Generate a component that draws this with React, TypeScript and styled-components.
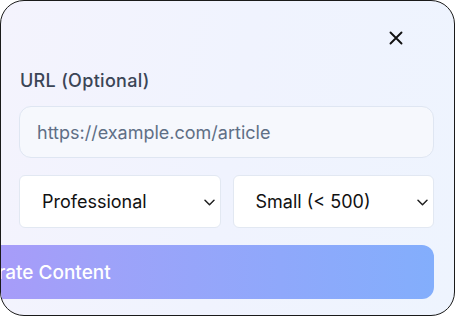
import React from "react";
import styled, { createGlobalStyle } from "styled-components";

const Global = createGlobalStyle`
  html, body { margin: 0; padding: 0; background: #ffffff; }
  * { box-sizing: border-box; }
`;

const Frame = styled.div`
  width: 455px;
  height: 316px;
  border: 1.5px solid #1a1a1a;
  border-radius: 24px;
  overflow: hidden;
  background: linear-gradient(100deg, #f4f3fd 0%, #f0f3fe 50%, #eef4fe 100%);
  font-family: Inter, "Noto Sans", sans-serif;
  display: flex;
  flex-direction: column;
  padding: 0 20px 0 18px;
`;

const Header = styled.div`
  height: 68px;
  display: flex;
  justify-content: flex-end;
  align-items: flex-start;
  padding-top: 29px;
  padding-right: 30px;
`;

const CloseButton = styled.button`
  width: 16px;
  height: 16px;
  padding: 0;
  border: none;
  background: transparent;
  display: flex;
  align-items: center;
  justify-content: center;
  color: #111111;
`;

const Label = styled.div`
  font-size: 18px;
  font-weight: 500;
  letter-spacing: 0.3px;
  color: #3b4556;
  height: 37px;
  padding-left: 1px;
  line-height: 24px;
`;

const Input = styled.div`
  height: 52px;
  border: 1px solid #dfe6f2;
  border-radius: 12px;
  background: #f6f8fd;
  display: flex;
  align-items: center;
  padding-left: 17px;
  font-size: 18px;
  color: #5f6f86;
`;

const Row = styled.div`
  margin-top: 17px;
  display: grid;
  grid-template-columns: 1fr 1fr;
  gap: 12px;
`;

const Select = styled.div`
  height: 53px;
  border: 1px solid #e2e8f2;
  border-radius: 6px;
  background: #ffffff;
  display: flex;
  align-items: center;
  justify-content: space-between;
  padding: 0 5px 0 22px;
  font-size: 18px;
  color: #111111;
`;

const Chevron = styled.svg`
  width: 11px;
  height: 7px;
  margin-top: 1px;
`;

const GenerateButton = styled.div`
  margin-top: 17px;
  margin-left: -97px;
  height: 54px;
  border-radius: 12px;
  background: linear-gradient(90deg, #ae97f9 0%, #9ea2f9 35%, #8fa8fb 70%, #83aefc 100%);
  display: flex;
  align-items: center;
  padding-left: 28px;
  font-size: 19px;
  font-weight: 500;
  color: #ffffff;
  white-space: nowrap;
`;

const ChevronIcon = () => (
  <Chevron viewBox="0 0 11 7" fill="none" stroke="#222" strokeWidth="1.5" strokeLinecap="round" strokeLinejoin="round">
    <path d="M1 1.2l4.5 4.5 4.5-4.5" />
  </Chevron>
);

export default function App() {
  return (
    <>
      <Global />
      <Frame>
        <Header>
          <CloseButton aria-label="Close">
            <svg width="14" height="14" viewBox="0 0 14 14" fill="none" stroke="#111" strokeWidth="1.9" strokeLinecap="round">
              <path d="M1.5 1.5l11 11M12.5 1.5l-11 11" />
            </svg>
          </CloseButton>
        </Header>
        <Label>URL (Optional)</Label>
        <Input>https://example.com/article</Input>
        <Row>
          <Select>
            <span>Professional</span>
            <ChevronIcon />
          </Select>
          <Select>
            <span>Small (&lt; 500)</span>
            <ChevronIcon />
          </Select>
        </Row>
        <GenerateButton>Generate Content</GenerateButton>
      </Frame>
    </>
  );
}
